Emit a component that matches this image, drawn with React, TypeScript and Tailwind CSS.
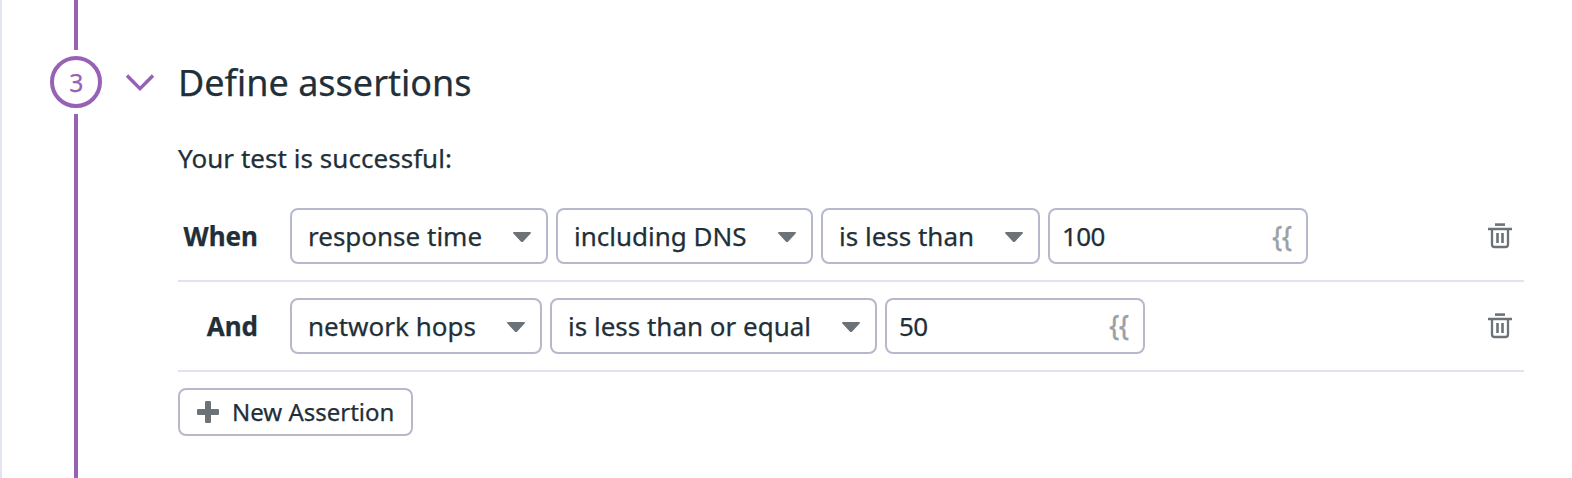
import React from "react";

function TrashIcon() {
  return (
    <svg className="block h-[26px] w-6" viewBox="0 0 24 26" fill="none" stroke="#6b7278">
      <path d="M7 1.6h10" strokeWidth="2.6" />
      <path d="M0 6h24" strokeWidth="2.5" />
      <path d="M4 6v15.5a2.5 2.5 0 0 0 2.5 2.5h11a2.5 2.5 0 0 0 2.5-2.5V6" strokeWidth="2.3" />
      <path d="M9.5 10v10M14.5 10v10" strokeWidth="2.6" />
    </svg>
  );
}

function Select({ label, width }: { label: string; width: string }) {
  return (
    <button
      type="button"
      className={`flex h-14 items-center justify-between rounded-lg border-2 border-[#b6b9cc] pr-[15px] pl-4 ${width}`}
    >
      <span className="whitespace-nowrap">{label}</span>
      <svg className="mt-0.5 h-[10px] w-[18px]" viewBox="0 0 18 10" fill="#6b7278">
        <path d="M1 0h16c1 0 1.3.9.6 1.6L10.2 9.4c-.7.7-1.7.7-2.4 0L.4 1.6C-.3.9 0 0 1 0Z" />
      </svg>
    </button>
  );
}

function ValueField({ value }: { value: string }) {
  return (
    <div className="flex h-14 w-[260px] items-center justify-between rounded-lg border-2 border-[#b6b9cc] pr-[14px] pl-3">
      <span className="tracking-[-0.6px]">{value}</span>
      <span className="mb-0.5 origin-center scale-y-[1.15] text-[#9ba0a3] [-webkit-text-stroke:0.5px_#9ba0a3]">{"{{"}</span>
    </div>
  );
}

function AssertionRow({ label, children }: { label: string; children: React.ReactNode }) {
  return (
    <div className="flex h-[90px] items-center border-b-2 border-[#e1e3ed] pr-3">
      <span className="w-20 text-right font-bold">{label}</span>
      <div className="ml-8 flex gap-2">{children}</div>
      <button type="button" className="ml-auto" aria-label="Delete assertion">
        <TrashIcon />
      </button>
    </div>
  );
}

export default function App() {
  return (
    <div className="flex h-[478px] w-[1572px] overflow-hidden border-l-2 border-[#e1e5ee] bg-white font-['Noto_Sans',sans-serif] text-[26px] leading-9 text-[#222f38] [-webkit-text-stroke:0.25px_currentColor]">
      <div className="ml-12 flex w-[52px] flex-col items-center gap-1.5">
        <div className="h-[50px] w-1 bg-[#9761b6]" />
        <div className="flex h-[52px] w-[52px] items-center justify-center rounded-full border-4 border-[#9761b6] text-[#9761b6]">
          <span className="scale-x-95 [-webkit-text-stroke:0.25px_#9761b6]">3</span>
        </div>
        <div className="w-1 flex-1 bg-[#9761b6]" />
      </div>
      <svg className="mt-[73px] ml-6 h-[19px] w-7" viewBox="0 0 28 19" fill="none" stroke="#9761b6" strokeWidth="3.4">
        <path d="M1 2.5 14 15.6 27 2.5" />
      </svg>
      <div className="ml-6 w-[1346px] pt-[58px]">
        <h2 className="text-[36px] leading-[50px]">Define assertions</h2>
        <p className="mt-8 tracking-[0.04px]">Your test is successful:</p>
        <div className="mt-[16px]">
          <AssertionRow label="When">
            <Select label="response time" width="w-[258px]" />
            <Select label="including DNS" width="w-[257px]" />
            <Select label="is less than" width="w-[219px]" />
            <ValueField value="100" />
          </AssertionRow>
          <AssertionRow label="And">
            <Select label="network hops" width="w-[252px]" />
            <Select label="is less than or equal" width="w-[327px]" />
            <ValueField value="50" />
          </AssertionRow>
        </div>
        <button
          type="button"
          className="mt-4 flex h-12 w-[235px] items-center rounded-lg border-2 border-[#b6b9cc] pl-[17px] text-2xl"
        >
          <svg className="h-[22px] w-[22px]" viewBox="0 0 22 22" fill="#6b7278">
            <rect x="8" y="0" width="6" height="22" rx="1.2" />
            <rect x="0" y="8" width="22" height="6" rx="1.2" />
          </svg>
          <span className="ml-[13px] whitespace-nowrap">New Assertion</span>
        </button>
      </div>
    </div>
  );
}
